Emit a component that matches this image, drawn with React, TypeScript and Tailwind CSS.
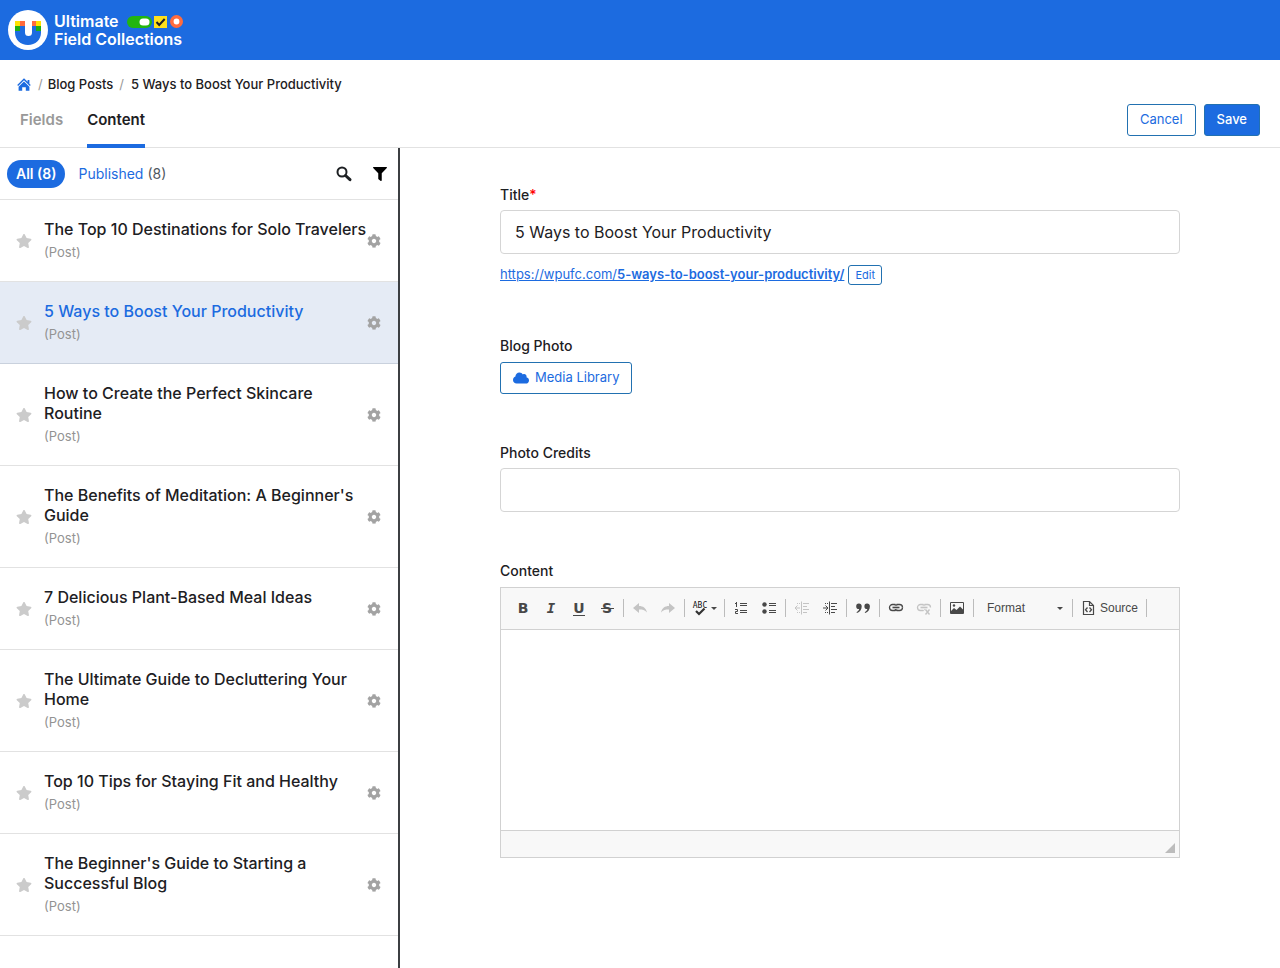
import type { ReactNode } from 'react'
import clsx from 'clsx'
import { FaCloud, FaCog, FaFilter, FaStar } from 'react-icons/fa'

const posts = [
  { id: 1, title: 'The Top 10 Destinations for Solo Travelers' },
  { id: 2, title: '5 Ways to Boost Your Productivity', active: true },
  { id: 3, title: 'How to Create the Perfect Skincare Routine' },
  { id: 4, title: "The Benefits of Meditation: A Beginner's Guide" },
  { id: 5, title: '7 Delicious Plant-Based Meal Ideas' },
  { id: 6, title: 'The Ultimate Guide to Decluttering Your Home' },
  { id: 7, title: 'Top 10 Tips for Staying Fit and Healthy' },
  { id: 8, title: "The Beginner's Guide to Starting a Successful Blog" },
]

function LogoMark() {
  return (
    <svg width="40" height="40" viewBox="0 0 40 40" aria-hidden="true">
      <circle cx="20" cy="20" r="20" fill="#fff" />
      <path d="M7 16h10v6.500a3.500 3.500 0 0 0 7 0V16h9v6.500C33 30 27.500 35 20 35S7 30 7 22.500z" fill="#1c6be0" />
      <path d="M7 11h5v5H7zM28 11h5v5h-5z" fill="#ffe100" />
      <path d="M12 11h5v5h-5zM24 11h4v5h-4z" fill="#ff6b3d" />
      <path d="M7 16h5v5H7zM28 16h5v5h-5z" fill="#1fae12" />
    </svg>
  )
}

function LogoBadges() {
  return (
    <svg width="57" height="14" viewBox="0 0 57 14" aria-hidden="true">
      <rect x="0" y="2" width="25" height="12" rx="6" fill="#22b510" />
      <rect x="12.500" y="4.500" width="10" height="7" rx="3.500" fill="#fff" />
      <rect x="27" y="2" width="13" height="12" fill="#ffe01b" />
      <path d="M29.500 8l2.700 3 5.500-6" fill="none" stroke="#222" strokeWidth="2" />
      <circle cx="49.500" cy="7.500" r="4.700" fill="#fff" stroke="#ff6b3d" strokeWidth="3.600" />
    </svg>
  )
}

function HomeIcon() {
  return (
    <svg width="18" height="18" viewBox="0 0 20 20" fill="currentColor" aria-hidden="true">
      <path d="M16 8.500l1.530 1.530-1.060 1.060L10 4.600l-6.470 6.490-1.060-1.060L10 2.500l4 4v-2h2v4zm-6-2.460l6 5.990V16.500h-4v-4H8v4H4v-4.470z" />
    </svg>
  )
}

function SearchIcon() {
  return (
    <svg width="20" height="20" viewBox="0 0 20 20" fill="none" stroke="currentColor" aria-hidden="true">
      <circle cx="8" cy="8" r="4.500" strokeWidth="2" />
      <path d="M11.500 11.500l4.500 4.200" strokeWidth="3" strokeLinecap="round" />
    </svg>
  )
}

function Post({ title, active }: { title: string; active?: boolean }) {
  return (
    <li
      className={clsx(
        'flex items-center border-b py-[19px] pl-4 pr-[17px]',
        active ? 'border-[#c9d1dd] bg-[#e5ebf5]' : 'border-[#e2e2e2]',
      )}
    >
      <button type="button" aria-label="Favorite" className="mr-3 text-[#cbcbcb]">
        <FaStar size={16} />
      </button>
      <div className="min-w-0 flex-1">
        <a
          href="#post"
          className={clsx('block text-base leading-5 font-medium', active ? 'text-[#1c6be0]' : 'text-[#1d2023]')}
        >
          {title}
        </a>
        <span className="mt-[3px] block text-[13px] leading-5 text-[#939393]">(Post)</span>
      </div>
      <button type="button" aria-label="Post settings" className="text-[#a3a3a3]">
        <FaCog size={14} />
      </button>
    </li>
  )
}

function Tool({ label, disabled, children }: { label: string; disabled?: boolean; children: ReactNode }) {
  return (
    <button
      type="button"
      aria-label={label}
      disabled={disabled}
      className="flex h-7 w-7 items-center justify-center text-[#484848] disabled:text-[#c4c4c4]"
    >
      {children}
    </button>
  )
}

function Glyph({ children }: { children: ReactNode }) {
  return (
    <svg width="16" height="16" viewBox="0 0 16 16" fill="none" stroke="currentColor" aria-hidden="true">
      {children}
    </svg>
  )
}

const Separator = () => <span className="mx-0.5 h-[18px] w-px bg-[#bcbcbc]" />

const Caret = () => (
  <svg width="6" height="3" viewBox="0 0 6 3" fill="#484848" aria-hidden="true">
    <path d="M0 0h6L3 3z" />
  </svg>
)

function IndentGlyph({ flip }: { flip?: boolean }) {
  return (
    <Glyph>
      <path d="M7.500 1.500v13" />
      <path d="M9 3.500h6M9 6.500h4M9 9.500h6M9 12.500h4" />
      <path d="M3 3.500h3M3 12.500h3" strokeDasharray="1 1" />
      <path d="M1 8h5" />
      <path d={flip ? 'M3.500 5.500L1 8l2.500 2.500' : 'M3.500 5.500L6 8l-2.500 2.500'} />
    </Glyph>
  )
}

function ChainGlyph({ broken }: { broken?: boolean }) {
  return (
    <Glyph>
      <path d="M7.500 4.500h-3a3 3 0 0 0 0 6h3M8.500 4.500h3a3 3 0 0 1 3 3" strokeWidth="1.300" />
      <path d="M4.500 7.500h7" strokeWidth="1.600" />
      <path d="M7.500 4.500c1 .3 1.300 1 1.300 1.600M7.500 10.500c1-.3 1.300-1 1.300-1.600M8.500 4.500c-1 .3-1.300 1-1.300 1.600" />
      {broken ? (
        <path d="M9.500 9.500l4 5M13.500 9.500l-4 5" strokeWidth="1.400" />
      ) : (
        <path d="M8.500 10.500h3a3 3 0 0 0 3-3M8.500 10.500c-1-.3-1.300-1-1.300-1.600" strokeWidth="1.300" />
      )}
    </Glyph>
  )
}

function Toolbar() {
  return (
    <div className="flex flex-wrap items-center border-b border-[#d1d1d1] bg-[#f8f8f8] px-2 pt-[6px] pb-[7px]">
      <Tool label="Bold">
        <span className="font-['DejaVu_Sans'] text-sm leading-4 font-bold">B</span>
      </Tool>
      <Tool label="Italic">
        <span className="font-['DejaVu_Sans_Mono'] text-sm leading-4 font-bold italic">I</span>
      </Tool>
      <Tool label="Underline">
        <span className="border-b border-current font-['DejaVu_Sans'] text-sm leading-[14px] font-bold">U</span>
      </Tool>
      <Tool label="Strikethrough">
        <Glyph>
          <text x="8" y="13" textAnchor="middle" fontFamily="DejaVu Sans" fontWeight="700" fontSize="14" fill="currentColor" stroke="none">
            S
          </text>
          <path d="M2 8.500h13" />
        </Glyph>
      </Tool>
      <Separator />
      <Tool label="Undo" disabled>
        <Glyph>
          <path d="M1 8l6-5v3c4 0 7 2 8 6.500C13 10 10.500 9.500 7 9.500V13z" fill="currentColor" stroke="none" />
        </Glyph>
      </Tool>
      <Tool label="Redo" disabled>
        <Glyph>
          <path d="M15 8L9 3v3c-4 0-7 2-8 6.500C3 10 5.500 9.500 9 9.500V13z" fill="currentColor" stroke="none" />
        </Glyph>
      </Tool>
      <Separator />
      <button type="button" aria-label="Spell check" className="flex h-7 w-[35px] items-center justify-center gap-[3px] text-[#333]">
        <svg width="16" height="16" viewBox="0 0 16 16" fill="none" stroke="currentColor" aria-hidden="true">
          <text x="8" y="8" textAnchor="middle" fontFamily="DejaVu Sans Mono" fontSize="8" fill="#111" stroke="none">
            ABC
          </text>
          <path d="M4 11l3 3 5.500-5.500" strokeWidth="2.200" />
        </svg>
        <Caret />
      </button>
      <Separator />
      <Tool label="Numbered list">
        <Glyph>
          <path d="M7 3.500h7M7 5.500h7M7 10.500h7M7 12.500h7" />
          <path d="M2 3.500h1.500M3.500 2v5M2 9.500h2.500v2h-2v2H5" />
        </Glyph>
      </Tool>
      <Tool label="Bulleted list">
        <Glyph>
          <path d="M8 3.500h7M8 5.500h7M8 10.500h7M8 12.500h7" />
          <circle cx="3.500" cy="4.500" r="2.200" fill="currentColor" stroke="none" />
          <circle cx="3.500" cy="11.500" r="2.200" fill="currentColor" stroke="none" />
        </Glyph>
      </Tool>
      <Separator />
      <Tool label="Decrease indent" disabled>
        <IndentGlyph flip />
      </Tool>
      <Tool label="Increase indent">
        <IndentGlyph />
      </Tool>
      <Separator />
      <Tool label="Block quote">
        <Glyph>
          <path
            d="M3.800 3.500a2.700 2.700 0 0 1 2.900 2.900c0 3-1.700 5.300-4.700 6.600l-.5-.8c1.500-.9 2.400-2 2.600-3.200a2.700 2.700 0 0 1-.3-5.500zM12 3.500a2.700 2.700 0 0 1 2.900 2.900c0 3-1.700 5.300-4.700 6.600l-.5-.8c1.500-.9 2.400-2 2.600-3.200a2.700 2.700 0 0 1-.3-5.500z"
            fill="currentColor"
            stroke="none"
          />
        </Glyph>
      </Tool>
      <Separator />
      <Tool label="Link">
        <ChainGlyph />
      </Tool>
      <Tool label="Unlink" disabled>
        <ChainGlyph broken />
      </Tool>
      <Separator />
      <Tool label="Image">
        <Glyph>
          <path d="M1.500 2.500h13v11h-13z" />
          <path d="M2 13v-2l3-3 2.500 2L11 6.500l3 3V13z" fill="currentColor" stroke="none" />
          <circle cx="5" cy="5.500" r="1.200" fill="currentColor" stroke="none" />
        </Glyph>
      </Tool>
      <Separator />
      <button
        type="button"
        className="flex h-7 w-[94px] items-center justify-between pr-[7px] pl-[11px] font-['Liberation_Sans',sans-serif] text-xs text-[#484848]"
      >
        Format
        <Caret />
      </button>
      <Separator />
      <button
        type="button"
        className="flex h-7 w-[69px] items-center gap-1 pl-[5px] font-['Liberation_Sans',sans-serif] text-xs text-[#484848]"
      >
        <Glyph>
          <path d="M3.500 1.500h6l4 4v9h-10zM9.500 1.500v4h4" strokeWidth="1.200" />
          <path d="M7.500 7.500L5.500 9.800l2 2.200M9.500 7.500l2 2.300-2 2.200" strokeWidth="1.300" />
        </Glyph>
        Source
      </button>
      <Separator />
    </div>
  )
}

function Editor() {
  return (
    <div className="border border-[#d1d1d1]">
      <Toolbar />
      <textarea id="content" className="block h-[200px] w-full resize-none bg-white p-5 text-[13px] outline-none" />
      <div className="flex h-[27px] items-end justify-end border-t border-[#d1d1d1] bg-[#f8f8f8] pr-1 pb-1">
        <svg width="10" height="10" viewBox="0 0 10 10" fill="#bcbcbc" aria-hidden="true">
          <path d="M10 0v10H0z" />
        </svg>
      </div>
    </div>
  )
}

const labelClass = 'block text-sm leading-5 font-medium text-[#1d2023]'
const inputClass = 'block h-11 w-full rounded border border-[#d5d5d5] bg-white px-[14px] text-base text-[#1d2023] outline-none'
const outlineButton = 'rounded-[3px] border border-[#2271b1] bg-white text-[#1c6be0]'

export default function App() {
  return (
    <div className="flex min-h-screen flex-col bg-white font-[Inter,sans-serif] text-[#1d2023]">
      <header className="flex h-[60px] items-center gap-[6px] bg-[#1c6be0] px-2 text-white">
        <LogoMark />
        <div className="text-base leading-[18px] font-semibold">
          <div className="flex items-center gap-2">
            Ultimate
            <LogoBadges />
          </div>
          <div>Field Collections</div>
        </div>
      </header>

      <div className="flex items-end justify-between border-b border-[#e2e2e2] pr-5">
        <div>
          <nav aria-label="Breadcrumb" className="mt-[15px] flex h-5 items-center pl-[15px] text-[13px] font-medium">
            <a href="#home" aria-label="Home" className="text-[#1c6be0]">
              <HomeIcon />
            </a>
            <span className="ml-[5px] font-normal text-[#999]">/</span>
            <a href="#blog-posts" className="ml-[5px]">Blog Posts</a>
            <span className="ml-[6px] font-normal text-[#999]">/</span>
            <span className="ml-[7px]">5 Ways to Boost Your Productivity</span>
          </nav>
          <nav aria-label="Views" className="flex gap-6 pt-[15px] pl-5 text-[15px] leading-5 font-semibold">
            <a href="#fields" className="h-[37px] text-[#999]">Fields</a>
            <a href="#content-tab" className="-mb-px h-[38px] border-b-4 border-[#1c6be0]">Content</a>
          </nav>
        </div>
        <div className="mb-[11px] flex gap-2 text-[13px]">
          <button type="button" className={clsx(outlineButton, 'h-8 px-3')}>Cancel</button>
          <button type="button" className="h-8 rounded-[3px] border border-[#2271b1] bg-[#1c6be0] px-3 font-medium text-white">Save</button>
        </div>
      </div>

      <div className="flex flex-1">
        <aside className="w-[400px] shrink-0 border-r-2 border-[#3c3f42]">
          <div className="flex h-[52px] items-center border-b border-[#e2e2e2] pr-[11px] pl-[7px] text-sm">
            <button type="button" className="h-7 rounded-full bg-[#1c6be0] px-[9px] font-semibold text-white">All (8)</button>
            <a href="#published" className="ml-[13px] text-[#1c6be0]">
              Published <span className="text-[#50575e]">(8)</span>
            </a>
            <button type="button" aria-label="Search" className="ml-auto text-[#1d2023]">
              <SearchIcon />
            </button>
            <button type="button" aria-label="Filter" className="ml-[19px] text-black">
              <FaFilter size={14} />
            </button>
          </div>
          <ul>
            {posts.map((post) => (
              <Post key={post.id} title={post.title} active={post.active} />
            ))}
          </ul>
        </aside>

        <main className="min-w-0 flex-1 px-[100px] pt-[37px]">
          <form className="flex flex-col gap-[49px]">
            <div>
              <label htmlFor="title" className={clsx(labelClass, 'mb-[5px]')}>
                Title<span className="text-[#f00]">*</span>
              </label>
              <input id="title" type="text" defaultValue="5 Ways to Boost Your Productivity" className={inputClass} />
              <div className="mt-[9px] flex h-6 items-center gap-1 text-[13px]">
                <a href="#permalink" className="text-[#1c6be0] underline">
                  https://wpufc.com/<span className="font-semibold">5-ways-to-boost-your-productivity/</span>
                </a>
                <button type="button" className={clsx(outlineButton, 'h-5 px-[6px] text-[11px]')}>Edit</button>
              </div>
            </div>

            <div>
              <span id="photo-label" className={clsx(labelClass, 'mb-[6px]')}>Blog Photo</span>
              <button
                type="button"
                aria-describedby="photo-label"
                className={clsx(outlineButton, 'flex h-8 items-center gap-[6px] px-3 text-[13px]')}
              >
                <FaCloud size={16} />
                Media Library
              </button>
            </div>

            <div>
              <label htmlFor="credits" className={clsx(labelClass, 'mb-[5px]')}>Photo Credits</label>
              <input id="credits" type="text" className={inputClass} />
            </div>

            <div>
              <label htmlFor="content" className={clsx(labelClass, 'mb-[6px]')}>Content</label>
              <Editor />
            </div>
          </form>
        </main>
      </div>
    </div>
  )
}
